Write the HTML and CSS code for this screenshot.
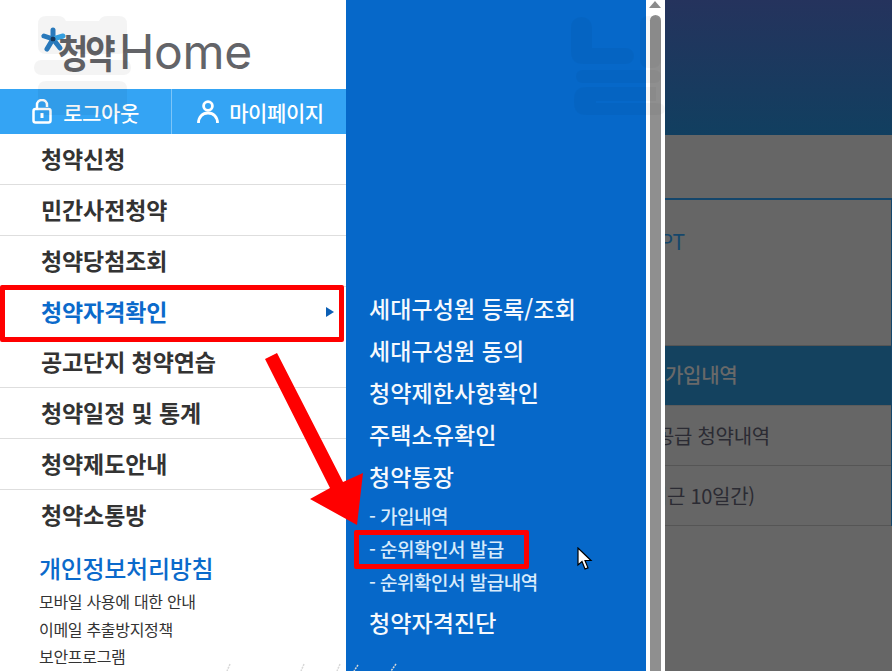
FILE: index.html
```html
<!DOCTYPE html>
<html lang="ko">
<head>
<meta charset="utf-8">
<title>청약Home</title>
<link rel="stylesheet" href="styles.css">
</head>
<body>
<div class="app">
  <aside class="side">
    <header class="logo">
      <svg class="logo-star" width="26" height="28" viewBox="0 0 26 28">
        <g stroke-width="5" stroke-linecap="round">
          <path d="M13 13V4" stroke="#2b7fc4"/>
          <path d="M13 13L4 10" stroke="#2b7fc4"/>
          <path d="M13 13L7 23" stroke="#2b7fc4"/>
          <path d="M13 13L20 22" stroke="#2b7fc4"/>
          <path d="M13 13L23 10" stroke="#37a6e8"/>
        </g>
        <circle cx="13" cy="13" r="2.5" fill="#17385f"/>
      </svg>
      <span class="logo-ko">청약</span><span class="logo-en">Home</span>
    </header>
    <div class="account">
      <a class="account-btn account-logout">
        <svg width="20" height="25" viewBox="0 0 20 25" fill="none" stroke="#fff" stroke-width="2.500"><rect x="1.500" y="10" width="17" height="13.500" rx="2"/><path d="M5 10V6a5 5 0 0 1 10 0v2"/><rect x="8.500" y="14" width="3" height="5" fill="#fff" stroke="none"/></svg>
        <span>로그아웃</span>
      </a>
      <a class="account-btn account-my">
        <svg width="22" height="24" viewBox="0 0 22 24" fill="none" stroke="#fff" stroke-width="2.800"><circle cx="11" cy="6" r="4.400"/><path d="M1.500 23c0-6 4-10 9.500-10s9.500 4 9.500 10"/></svg>
        <span>마이페이지</span>
      </a>
    </div>
    <ul class="menu">
      <li class="menu-item">청약신청</li>
      <li class="menu-item">민간사전청약</li>
      <li class="menu-item">청약당첨조회</li>
      <li class="menu-item menu-item-on">청약자격확인<i class="menu-caret"></i></li>
      <li class="menu-item">공고단지 청약연습</li>
      <li class="menu-item">청약일정 및 통계</li>
      <li class="menu-item">청약제도안내</li>
      <li class="menu-item menu-item-last">청약소통방</li>
    </ul>
    <div class="foot">
      <a class="foot-main">개인정보처리방침</a>
      <a class="foot-link">모바일 사용에 대한 안내</a>
      <a class="foot-link">이메일 추출방지정책</a>
      <a class="foot-link">보안프로그램</a>
    </div>
  </aside>
  <nav class="panel">
    <a class="panel-link">세대구성원 등록/조회</a>
    <a class="panel-link">세대구성원 동의</a>
    <a class="panel-link">청약제한사항확인</a>
    <a class="panel-link">주택소유확인</a>
    <a class="panel-link">청약통장</a>
    <div class="panel-sub">
      <a class="sub-link">- 가입내역</a>
      <a class="sub-link">- 순위확인서 발급</a>
      <a class="sub-link">- 순위확인서 발급내역</a>
    </div>
    <a class="panel-link">청약자격진단</a>
  </nav>
  <div class="scrollbar"><i class="scroll-up"></i><i class="scroll-thumb"></i></div>
  <main class="page">
    <div class="page-hero"></div>
    <section class="page-box">
      <div class="box-title">APT</div>
      <div class="table">
        <div class="table-head"><span>가입내역</span></div>
        <div class="table-row"><span class="row-a">공급 청약내역</span></div>
        <div class="table-row"><span class="row-b">최근 10일간)</span></div>
      </div>
    </section>
  </main>
</div>
<svg class="watermark" width="892" height="671" viewBox="0 0 892 671">
  <path class="wm-fill" d="M46 16h12q6 0 8 5h33q2-5 8-5h12q8 0 8 8v22q0 8-8 8H46q-8 0-8-8V24q0-8 8-8z"/>
  <rect class="wm-fill" x="34" y="60" width="97" height="15" rx="7"/>
  <path class="wm-fill" d="M46 81h73q8 0 8 8v19q0 7-8 7H46q-8 0-8-7V89q0-8 8-8z"/>
  <g class="wm-faint">
    <path d="M582 17a10 10 0 0 1 10 10v21h34a8 8 0 0 1 0 16h-43q-12 0-12-12V27a10 10 0 0 1 11-10z"/>
    <rect x="640" y="16" width="21" height="52" rx="8"/>
    <rect x="576" y="70" width="85" height="13" rx="6"/>
    <path d="M586 87h70v14h-60v2h60q9 0 9 6t-9 6h-70q-12 0-12-12v-4q0-12 12-12z"/>
  </g>
  <g class="wm-ticks"><path d="M230 664l-3 7M304 664l-3 7M340 664l-3 7M358 665l-4 6M396 664l-5 7"/></g>
</svg>
<div class="frame frame-menu"></div>
<div class="frame frame-sub"></div>
<svg class="arrow" width="110" height="180" viewBox="260 350 110 180"><polygon fill="#ff0000" points="265,359 277,353 343,482 363,473 357,525 310,499 330,488"/></svg>
<svg class="cursor" width="16" height="24" viewBox="0 0 16 24"><path d="M1 1V18L5 14.500L8 22L11 20.800L8 13.500H14Z" fill="#fff" stroke="#000" stroke-width="1.200"/></svg>
</body>
</html>
```
FILE: styles.css
```css
* { box-sizing: border-box; }
html, body { margin: 0; height: 100%; overflow: hidden; }
body { position: relative; font-family: "Noto Sans CJK KR", "Noto Sans", sans-serif; background: #666; }
a { display: block; }
ul { margin: 0; padding: 0; list-style: none; }

.app { display: flex; height: 671px; overflow: hidden; }

.side { width: 346px; flex: none; background: #fff; }

.logo { position: relative; height: 89px; padding: 27px 0 0 58px; display: flex; align-items: flex-start; }
.logo-star { position: absolute; left: 40px; top: 26px; }
.logo-ko { font-size: 33px; line-height: 50px; font-weight: 700; color: #636468; letter-spacing: -3px; margin-right: 6px; transform: scaleY(1.180); transform-origin: 50% 55%; }
.logo-en { font-family: "Inter", sans-serif; font-size: 48px; line-height: 50px; font-weight: 400; color: #636468; letter-spacing: -.3px; }

.account { display: flex; height: 45px; background: #34a4f4; color: #fff; }
.account-btn { display: flex; align-items: center; justify-content: center; font-size: 21px; font-weight: 500; letter-spacing: -.4px; }
.account-logout { width: 172px; gap: 11px; border-right: 1px solid #7cc5f8; }
.account-my { flex: 1; gap: 10px; padding-left: 3px; }

.menu-item { position: relative; height: 51px; padding: 0 0 2px 41px; display: flex; align-items: center; font-size: 23px; font-weight: 700; color: #333; letter-spacing: -.1px; border-bottom: 1px solid #dedede; }
.menu-item-on { height: 50px; color: #0b6acb; border-bottom-color: transparent; }
.menu-item-last { padding-bottom: 4px; border-bottom: 0; }
.menu-caret { position: absolute; left: 326px; top: 20px; border-left: 8px solid #0b5fb5; border-top: 5px solid transparent; border-bottom: 5px solid transparent; }

.foot { padding: 10px 0 0 39px; }
.foot-main { font-size: 24px; line-height: 34px; font-weight: 500; color: #0b6acb; letter-spacing: -.3px; margin-bottom: 3px; }
.foot-link { font-size: 16px; line-height: 27.500px; color: #333; letter-spacing: -.3px; }

.panel { width: 300px; flex: none; background: #0668c9; padding: 287px 0 0 23px; color: #f6f9fd; }
.panel-link { height: 42px; font-size: 23px; line-height: 42px; font-weight: 500; letter-spacing: .1px; }
.panel-sub { padding: 2px 0 3px; }
.sub-link { font-size: 19px; line-height: 33px; color: #d8ebfb; letter-spacing: -.5px; font-weight: 500; }

.scrollbar { width: 19px; flex: none; background: #fff; padding: 1px 0 0 3px; }
.scroll-up { display: block; width: 0; margin-bottom: 7px; border-left: 6.500px solid transparent; border-right: 6.500px solid transparent; border-bottom: 7px solid #8b8b8b; }
.scroll-thumb { display: block; width: 11px; height: 700px; margin-left: 1px; background: #8f8f8f; border-radius: 5.500px 5.500px 0 0; }

.page { flex: 1; min-width: 0; overflow: hidden; background: #666; }
.page-hero { height: 135px; background: linear-gradient(#25335d, #113f60); }
.page-box { margin: 63px 0 0 -40px; height: 328px; border-top: 2px solid #14466b; border-right: 1px solid #14466b; }
.box-title { height: 145px; padding-top: 26px; font-size: 21px; line-height: 30px; color: #15476b; text-indent: 22px; }
.table-head { height: 61px; background: #14425f; border-top: 1px solid #555; border-bottom: 1px solid #5c5c5c; display: flex; align-items: center; padding: 0 0 3px 40px; color: #696969; font-size: 20px; font-weight: 500; letter-spacing: -.3px; }
.table-row { height: 60px; border-bottom: 1px solid #555; display: flex; align-items: center; font-size: 20px; color: #2b2b33; letter-spacing: -.3px; }
.row-a { margin-left: 31px; }
.row-b { margin-left: 24px; }

.watermark { position: absolute; left: 0; top: 0; }
.wm-fill { fill: rgba(0, 0, 0, .045); }
.wm-faint { fill: rgba(0, 0, 0, .03); }
.wm-ticks path { fill: none; stroke: #d8d8d8; stroke-width: 1.500; stroke-dasharray: 2 1; }

.frame { position: absolute; border: 5px solid #f00; border-radius: 2px; }
.frame-menu { left: 0; top: 285px; width: 344px; height: 57px; }
.frame-sub { left: 354px; top: 530px; width: 175px; height: 39px; }
.arrow { position: absolute; left: 260px; top: 350px; }
.cursor { position: absolute; left: 577px; top: 547px; }
```
